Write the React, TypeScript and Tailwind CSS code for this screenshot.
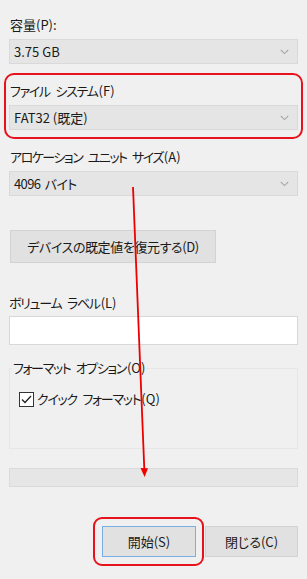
import React from "react";

const font = "[font-family:'Noto_Sans_CJK_JP','Noto_Sans',sans-serif] [font-feature-settings:'palt']";

function Chevron() {
  return (
    <svg width="9" height="6" viewBox="0 0 9 6" className="shrink-0">
      <path d="M0.8 1 L4.5 4.6 L8.2 1" fill="none" stroke="#a8a8a8" strokeWidth="1.1" />
    </svg>
  );
}

function Combo({ value, className = "" }: { value: string; className?: string }) {
  return (
    <div className="h-[25px] w-[289px] bg-[#e5e5e5] border border-[#d9d9d9] flex items-center justify-between pl-[4px] pr-[8px]">
      <span className={`text-[13px] leading-4 text-[#1a1a1a] ${className}`}>{value}</span>
      <Chevron />
    </div>
  );
}

// kana part is tightened, the access key suffix keeps normal spacing
function Kana({ text, suffix, tight }: { text: string; suffix: string; tight: string }) {
  return (
    <>
      <span className={`${tight} [word-spacing:4px]`}>{text}</span>
      <span className="ml-[1px]">{suffix}</span>
    </>
  );
}

function Label({ children, className = "" }: { children: React.ReactNode; className?: string }) {
  return <div className={`text-[13px] leading-4 h-4 text-[#1a1a1a] ${className}`}>{children}</div>;
}

export default function App() {
  return (
    <div className={`relative w-[307px] h-[579px] overflow-hidden bg-[#f0f0f0] ${font}`}>
      <div className="flex flex-col pl-[9px] pt-[17px]">
        <Label className="ml-[1px]">容量(P):</Label>
        <div className="mt-[6px]">
          <Combo value="3.75 GB" />
        </div>

        {/* highlighted file system */}
        <div className="mt-[9px] -ml-[5px] w-[299px] h-[66px] rounded-[10px] border-2 border-[#e8121c] pl-[3px] pt-[8px]">
          <Label className="ml-[1px]">
            <Kana text="ファイル システム" suffix="(F)" tight="tracking-[-1.3px]" />
          </Label>
          <div className="mt-[6px]">
            <Combo value="FAT32 (既定)" />
          </div>
        </div>

        <Label className="mt-[10px] ml-[1px]">
          <Kana text="アロケーション ユニット サイズ" suffix="(A)" tight="tracking-[-1.5px]" />
        </Label>
        <div className="mt-[6px]">
          <Combo value="4096 バイト" className="tracking-[-0.6px] [word-spacing:2px]" />
        </div>

        <button className="mt-[34px] ml-[1px] w-[206px] h-[33px] bg-[#e1e1e1] border border-[#d3d3d3] text-[13px] tracking-[-0.4px] text-[#1a1a1a] flex items-center justify-center">
          デバイスの既定値を復元する(D)
        </button>

        <Label className="mt-[32px]">
          <Kana text="ボリューム ラベル" suffix="(L)" tight="tracking-[-1.3px]" />
        </Label>
        <div className="mt-[5px] w-[289px] h-[29px] bg-white border border-[#d8d8d8]" />

        <fieldset className="mt-[15px] w-[289px] h-[89px] border border-[#e6e6e6] pl-[2px]">
          <legend className="px-[1px] text-[13px] leading-4 text-[#1a1a1a]">
            <Kana text="フォーマット オプション" suffix="(O)" tight="tracking-[-1.4px]" />
          </legend>
          <div className="mt-[15px] ml-[7px] flex items-center gap-[3px]">
            <div className="w-[15px] h-[15px] border border-[#333] bg-white flex items-center justify-center">
              <svg width="11" height="9" viewBox="0 0 11 9">
                <path d="M1 4.5 L4 7.5 L10 1" fill="none" stroke="#222" strokeWidth="1.3" />
              </svg>
            </div>
            <span className="text-[13px] leading-4 text-[#1a1a1a]">
              <Kana text="クイック フォーマット" suffix="(Q)" tight="tracking-[-1.3px]" />
            </span>
          </div>
        </fieldset>

        <div className="mt-[19px] w-[289px] h-[19px] bg-[#e6e6e6] border border-[#dadada]" />

        <div className="mt-[30px] w-[289px] flex items-center justify-end">
          <div className="rounded-[9px] border-2 border-[#e8121c] pl-[7px] pr-[6px] py-[7px]">
            <button className="w-[94px] h-[31px] bg-[#e1e1e1] border border-[#78b0e6] text-[13px] text-[#1a1a1a] flex items-center justify-center">
              開始(S)
            </button>
          </div>
          <button className="ml-[1px] w-[93px] h-[31px] bg-[#e1e1e1] border border-[#d3d3d3] text-[13px] text-[#1a1a1a] flex items-center justify-center">
            閉じる(C)
          </button>
        </div>
      </div>

      {/* annotation arrow */}
      <svg className="absolute left-0 top-0 pointer-events-none" width="307" height="579" viewBox="0 0 307 579">
        <line x1="133" y1="187" x2="144.3" y2="469" stroke="#ee0000" strokeWidth="1.8" />
        <path d="M140.5 468 L148 468.3 L144.6 477 Z" fill="#ee0000" />
      </svg>
    </div>
  );
}
